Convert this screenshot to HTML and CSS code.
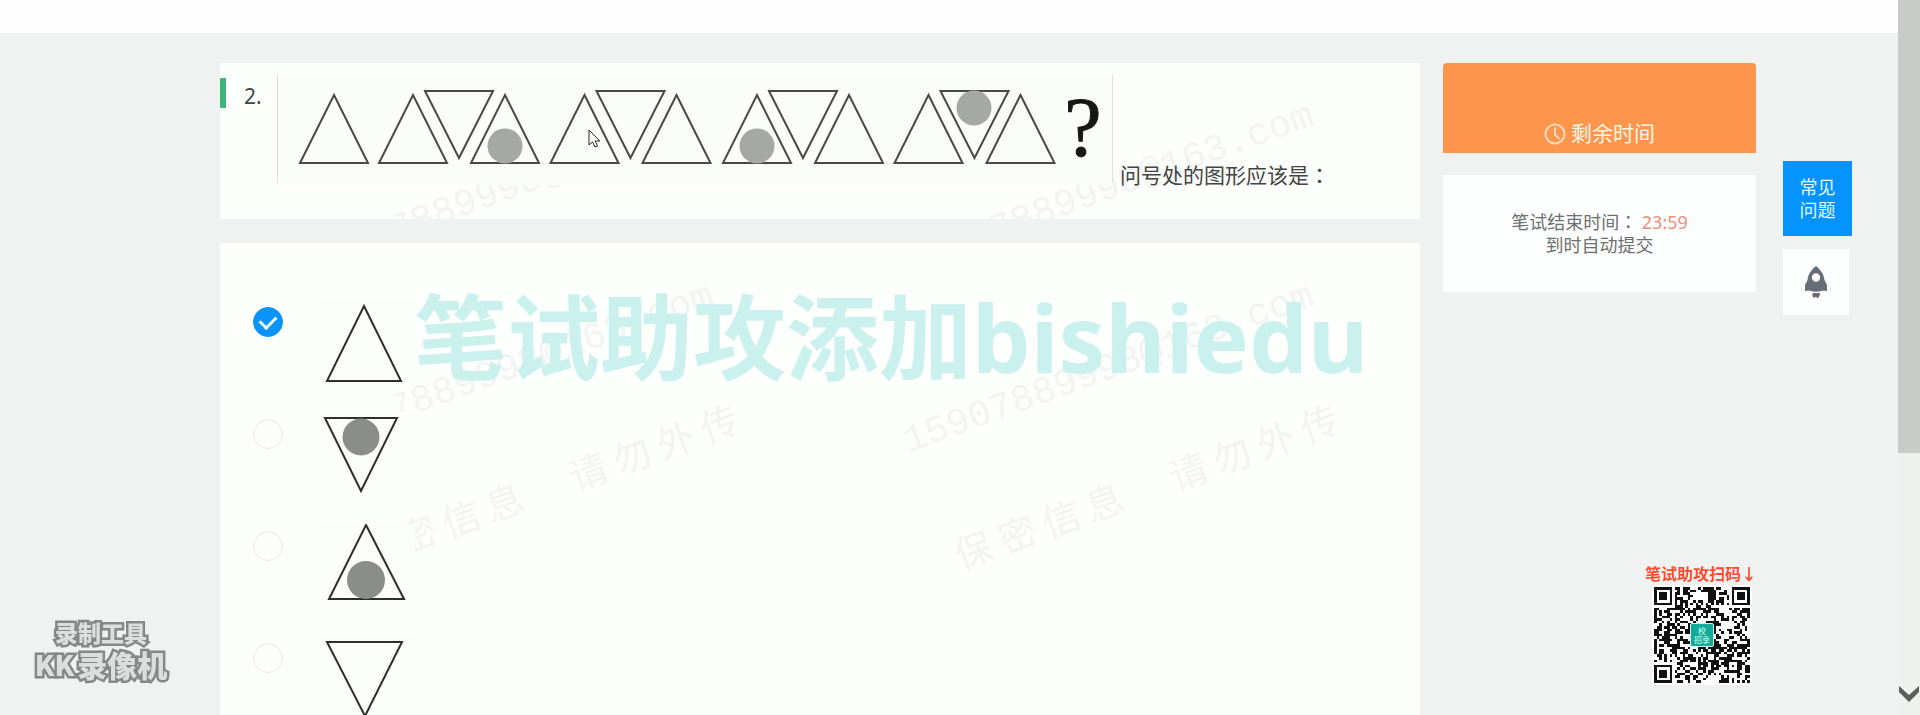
FILE: index.html
```html
<!DOCTYPE html>
<html lang="zh-CN">
<head>
<meta charset="utf-8">
<title>在线笔试</title>
<link rel="stylesheet" href="styles.css">
</head>
<body>
<header class="topbar"></header>
<div class="layout">
  <main class="content">
    <section class="card question">
      <div class="marks" aria-hidden="true">
        <span class="mark phone first">15907889998@163.com</span>
        <span class="mark phone second">15907889998@163.com</span>
      </div>
      <i class="accent"></i>
      <span class="number">2.</span>
      <svg class="figure" viewBox="0 0 836 110" role="img" aria-label="图形序列">
        <defs>
          <path id="up" d="M0 20L34 88H-34Z"/>
          <path id="down" d="M12 16H80L46 83Z"/>
          <g id="trio"><use href="#up"/><use href="#down"/><use href="#up" x="92"/></g>
        </defs>
        <g class="outline">
          <use href="#up" x="57"/>
          <use href="#trio" x="136"/>
          <use href="#trio" x="307.500"/>
          <use href="#trio" x="480"/>
          <use href="#trio" x="651.500"/>
        </g>
        <g class="dots"><circle cx="228" cy="71" r="17.500"/><circle cx="480" cy="71" r="17.500"/><circle cx="697" cy="33" r="17.500"/></g>
        <text class="unknown" x="806" y="81">?</text>
        <path class="edge" d="M.5 0V108M835.500 0V108"/>
      </svg>
      <span class="prompt">问号处的图形应该是<span class="colon" lang="zh-TW">：</span></span>
    </section>

    <section class="card options">
      <div class="marks" aria-hidden="true">
        <span class="mark phone first">15907889998@163.com</span>
        <span class="mark phone second">15907889998@163.com</span>
        <span class="mark notice first">保 密 信 息      请 勿 外 传</span>
        <span class="mark notice second">保 密 信 息      请 勿 外 传</span>
      </div>
      <label class="option">
        <input class="radio" type="radio" name="answer" checked aria-label="A">
        <svg class="choice" viewBox="0 0 95 85"><path d="M44 6L81 81H7Z"/></svg>
      </label>
      <label class="option">
        <input class="radio" type="radio" name="answer" aria-label="B">
        <svg class="choice" viewBox="0 0 95 85"><path d="M5 6H77L41 79Z"/><circle cx="41" cy="25" r="18.500"/></svg>
      </label>
      <label class="option">
        <input class="radio" type="radio" name="answer" aria-label="C">
        <svg class="choice" viewBox="0 0 95 85"><path d="M46 1L84 75H9Z"/><circle cx="46" cy="56" r="19"/></svg>
      </label>
      <label class="option">
        <input class="radio" type="radio" name="answer" aria-label="D">
        <svg class="choice" viewBox="0 0 95 85"><path d="M7 6H82L45 80Z"/></svg>
      </label>
    </section>
  </main>

  <aside class="side">
    <div class="timer">
      <svg class="clock" viewBox="0 0 22 22"><circle cx="11" cy="11" r="9.500"/><path d="M11 4.500V11.500L15.500 16"/></svg>
      <span>剩余时间</span>
    </div>
    <div class="deadline">
      <div>笔试结束时间<span class="colon" lang="zh-TW">：</span> <span class="time">23:59</span></div>
      <div>到时自动提交</div>
    </div>
  </aside>
</div>

<nav class="tools">
  <button class="faq" type="button">常见<br>问题</button>
  <button class="top" type="button" aria-label="返回顶部">
    <svg class="rocket" viewBox="0 0 22 33"><path fill-rule="evenodd" d="M11 0C15 3 19 8 19.500 14L22 19V25L18 24.500Q11 27 4 24.500L0 25V19L2.500 14C3 8 7 3 11 0ZM11 7.300A4.200 4.200 0 1 0 11 15.700A4.200 4.200 0 1 0 11 7.300Z"/><path d="M7.500 27H15L14.500 30L12.500 32.500L11 30.500L9 32L7.500 30Z"/></svg>
  </button>
</nav>

<div class="banner">笔试助攻添加bishiedu</div>

<svg class="pointer" viewBox="0 0 13 19"><path d="M1 1V16L4.500 12.800L7 18L9.500 17L7.200 12H11.800Z"/></svg>

<div class="recorder">
  <div class="tool-name">录制工具</div>
  <div class="product"><span class="latin">KK</span><span>录像机</span></div>
</div>

<div class="scan">
  <div class="scan-title">笔试助攻扫码↓</div>
  <div class="code">
    <svg class="qr" viewBox="0 0 37 37" shape-rendering="crispEdges"><path id="modules" d=""/></svg>
    <div class="badge"><span>校</span><span>招季</span></div>
  </div>
</div>

<div class="scrollbar">
  <div class="thumb"></div>
  <svg class="arrow" viewBox="0 0 20 16"><path d="M0 0L10 9L20 0V6L10 16L0 6Z"/></svg>
</div>
<script src="qr.js"></script>
</body>
</html>
```

FILE: styles.css
```css
* { box-sizing: border-box; }
body {
  margin: 0;
  height: 100vh;
  overflow: hidden;
  background: #f0f2f2;
  color: #444;
  font-family: "Noto Sans", "Noto Sans CJK SC", sans-serif;
}
button { border: 0; margin: 0; padding: 0; font: inherit; }

.topbar { height: 33px; background: #fdfefd; }
.layout {
  display: flex;
  align-items: flex-start;
  gap: 23px;
  height: calc(100vh - 33px);
  overflow: hidden;
  padding: 30px 164px 0 220px;
}
.content { flex: 1; min-width: 0; }
.card { position: relative; background: #fdfffd; }
.colon { font-family: "Noto Sans CJK TC", sans-serif; }

.question {
  display: flex;
  padding: 12px 0 34px;
  margin-bottom: 24px;
}
.accent { width: 6px; height: 30px; margin-top: 3px; background: #3fb57c; }
.number {
  width: 51px;
  padding-left: 18px;
  font-size: 21px;
  line-height: 42px;
}
.figure { position: relative; flex: none; width: 836px; height: 110px; background: #fbfdfa; }
.outline { fill: none; stroke: #484a48; stroke-width: 2; }
.dots { fill: #a5a8a4; }
.unknown {
  font-family: "Liberation Serif", serif;
  font-size: 84px;
  text-anchor: middle;
  fill: #161816;
  stroke: #161816;
  stroke-width: 1;
}
.edge { stroke: #dfe1df; }
.prompt {
  position: relative;
  align-self: flex-end;
  padding-left: 7px;
  font-family: "Noto Sans CJK SC", sans-serif;
  font-size: 21px;
  line-height: 22px;
  white-space: nowrap;
}

.marks { position: absolute; inset: 0 0 0 175px; overflow: hidden; }
.mark {
  position: absolute;
  white-space: pre;
  color: #f2f4f2;
  font-size: 38px;
  line-height: 40px;
  transform: rotate(-20deg);
  transform-origin: left center;
}
.phone { top: 180px; font-family: "Liberation Mono", monospace; }
.notice { top: 292px; font-family: "Noto Sans CJK SC", sans-serif; }
.phone.first { left: -90px; }
.phone.second { left: 510px; }
.notice.first { left: -40px; }
.notice.second { left: 560px; }

.options { padding: 57px 0 24px 33px; }
.option { position: relative; display: flex; align-items: flex-start; gap: 37px; height: 112px; }
.radio {
  appearance: none;
  width: 30px;
  height: 30px;
  margin: 7px 0 0;
  border: 1px solid #e7e9e8;
  border-radius: 50%;
  background: #fdfffd;
}
.radio:checked {
  border-color: #0a93fb;
  background: #0a93fb;
  display: grid;
  place-items: center;
}
.radio:checked::before {
  content: "";
  width: 13px;
  height: 8px;
  margin-top: -4px;
  border: solid #e9fbff;
  border-width: 0 0 3px 3px;
  transform: rotate(-45deg);
}
.choice { width: 95px; height: 85px; background: #fcfefb; fill: none; stroke: #2d2f2d; stroke-width: 2; }
.choice circle { fill: #8b8d8a; stroke: none; }

.side { width: 313px; }
.timer {
  display: flex;
  justify-content: center;
  align-items: flex-end;
  gap: 5px;
  height: 90px;
  padding-bottom: 6px;
  margin-bottom: 22px;
  border-radius: 4px 4px 0 0;
  background: #fd954d;
  color: #fff6e4;
  font-size: 21px;
  line-height: 28px;
}
.clock { width: 22px; height: 22px; margin-bottom: 2px; fill: none; stroke: #ffdcb9; stroke-width: 2; }
.deadline {
  padding: 35px 0;
  background: #fdfffe;
  color: #6d6f70;
  font-size: 18px;
  line-height: 23px;
  text-align: center;
}
.time { color: #ee8c7c; }

.tools {
  position: fixed;
  top: 161px;
  right: 68px;
  display: flex;
  flex-direction: column;
  gap: 13px;
}
.faq {
  width: 69px;
  height: 75px;
  background: #0594ff;
  color: #e0fbff;
  font-size: 18px;
  line-height: 23px;
}
.top { display: grid; place-items: center; width: 66px; height: 66px; background: #fdfffe; }
.rocket { width: 22px; height: 33px; fill: #666d76; }

.banner {
  position: fixed;
  top: 281px;
  left: 414px;
  color: #c6f0ed;
  font-size: 93px;
  line-height: 112px;
  font-weight: 700;
  white-space: nowrap;
  opacity: 0.9;
  pointer-events: none;
}
.pointer { position: fixed; left: 588px; top: 129px; width: 13px; height: 19px; fill: #fff; stroke: #222; }

.recorder {
  position: fixed;
  left: 30px;
  bottom: 34px;
  width: 142px;
  color: #dcdedd;
  font-family: "Noto Sans CJK SC", sans-serif;
  font-weight: 900;
  text-align: center;
  white-space: nowrap;
  -webkit-text-stroke: 5px #858887;
  paint-order: stroke fill;
}
.tool-name { font-size: 23px; line-height: 30px; }
.product { display: flex; justify-content: center; align-items: center; gap: 3px; font-size: 30px; line-height: 34px; }
.latin { font-size: 28px; }

.scan { position: fixed; right: 158px; bottom: 30px; width: 117px; }
.scan-title {
  color: #fd4a2f;
  font-family: "Noto Sans CJK SC", sans-serif;
  font-size: 16px;
  line-height: 24px;
  font-weight: 700;
  white-space: nowrap;
}
.code { position: relative; width: 100px; height: 100px; margin-left: 7px; padding: 2px; background: #fff; }
.qr { display: block; width: 96px; height: 96px; fill: #111; }
.badge {
  position: absolute;
  inset: 38px;
  display: flex;
  flex-direction: column;
  align-items: center;
  justify-content: center;
  border: 1px solid #d5efea;
  border-radius: 2px;
  background: #12ab98;
  color: #d8fff6;
  font-size: 8px;
  line-height: 9px;
}

.scrollbar {
  position: fixed;
  inset: 0 0 0 auto;
  display: flex;
  flex-direction: column;
  justify-content: space-between;
  align-items: center;
  width: 22px;
  padding-bottom: 13px;
  background: #eff1ee;
}
.thumb { width: 100%; height: 453px; background: #c9cbc9; }
.arrow { width: 20px; height: 16px; fill: #5c5e5c; }
```

FILE: qr.js
```js
// Fills the 37x37 code: three finder squares, one alignment square, timing lines and data modules.
const size = 37;
let seed = 20177;
const next = () => (seed = (seed * 1103515245 + 12345) % 2147483648) / 2147483648;
const ring = (x, y, cx, cy) => Math.max(Math.abs(x - cx), Math.abs(y - cy));
let d = "";
for (let y = 0; y < size; y++) {
  for (let x = 0; x < size; x++) {
    const r = Math.min(ring(x, y, 3, 3), ring(x, y, 33, 3), ring(x, y, 3, 33));
    const a = ring(x, y, 30, 30);
    let dark = next() < 0.5;
    if (r <= 4) dark = r < 2 || r === 3;
    else if (a <= 2) dark = a !== 1;
    else if (x === 6 || y === 6) dark = (x + y) % 2 === 0;
    if (dark) d += `M${x} ${y}h1v1h-1z`;
  }
}
document.getElementById("modules").setAttribute("d", d);
```
